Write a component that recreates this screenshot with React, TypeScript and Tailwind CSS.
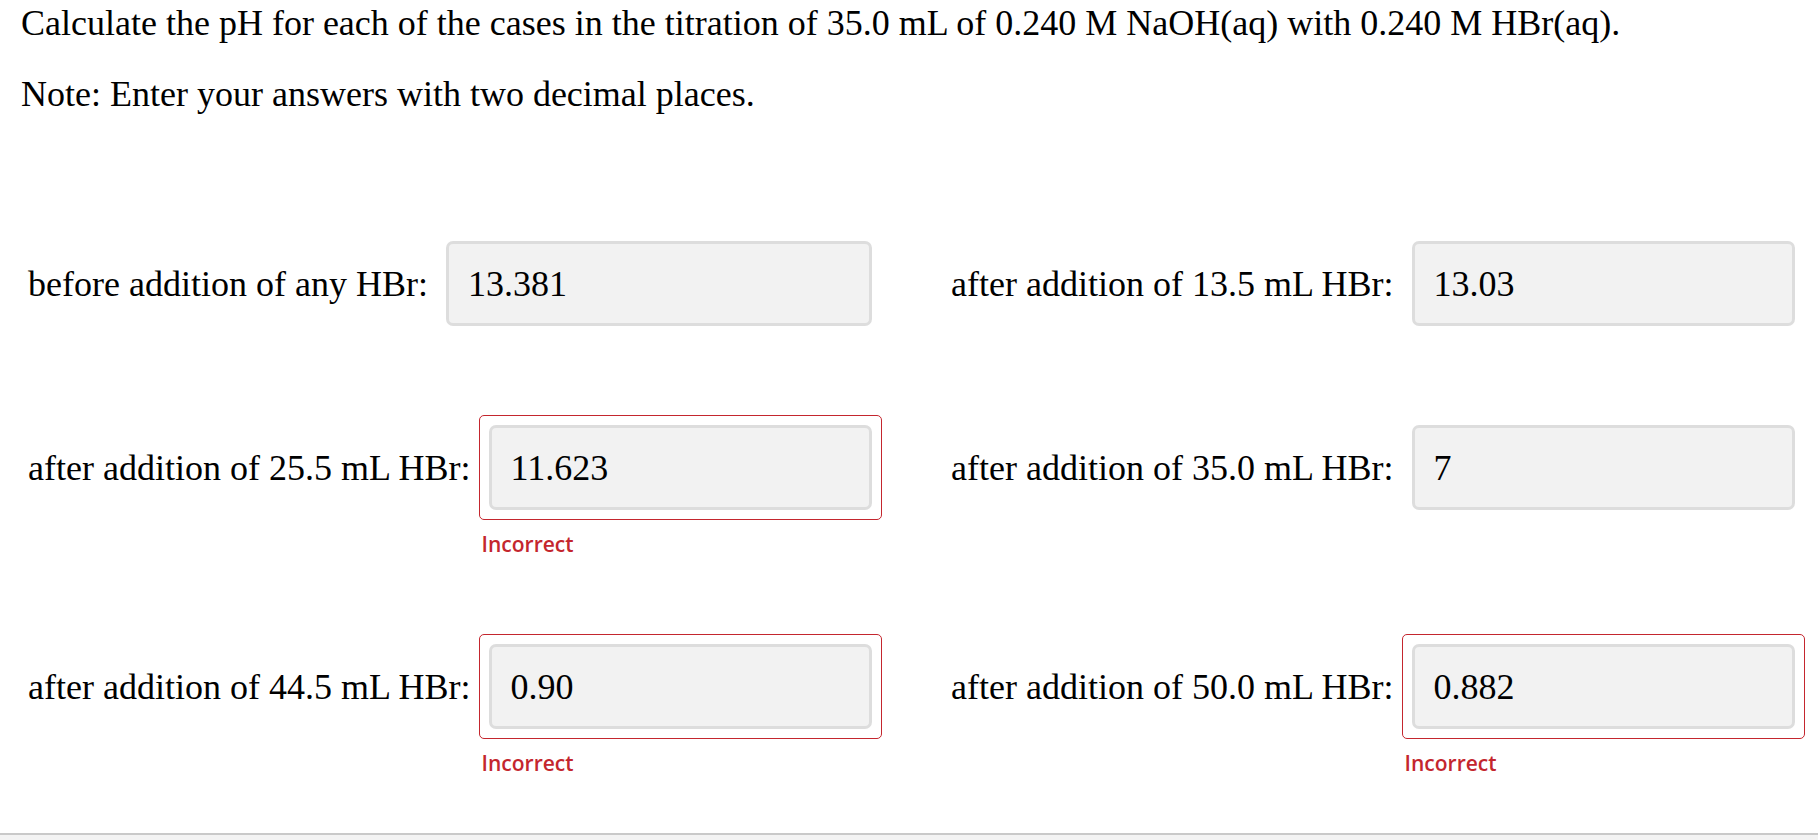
const rows = [
  [
    { label: "before addition of any HBr:", value: "13.381", wrong: false },
    { label: "after addition of 13.5 mL HBr:", value: "13.03", wrong: false },
  ],
  [
    { label: "after addition of 25.5 mL HBr:", value: "11.623", wrong: true },
    { label: "after addition of 35.0 mL HBr:", value: "7", wrong: false },
  ],
  [
    { label: "after addition of 44.5 mL HBr:", value: "0.90", wrong: true },
    { label: "after addition of 50.0 mL HBr:", value: "0.882", wrong: true },
  ],
];

function Answer({ label, value, wrong }: { label: string; value: string; wrong: boolean }) {
  return (
    <div className="flex items-start">
      <div className="h-[105px] flex items-center mr-[8px] whitespace-nowrap">{label}</div>
      <div className="flex-1 flex flex-col">
        <div
          className={
            wrong
              ? "border border-[#c4262e] rounded-[5px] p-[9px]"
              : "border border-transparent rounded-[5px] p-[9px]"
          }
        >
          <div className="h-[85px] bg-[#f2f2f2] border-[3px] border-[#dddddd] rounded-[7px] flex items-center pl-[19px]">
            {value}
          </div>
        </div>
        {wrong && (
          <div className="h-[35px] pt-[12px] pl-[3px] font-['Open_Sans',sans-serif] font-semibold text-[21px] leading-[24px] text-[#c4262e]">
            Incorrect
          </div>
        )}
      </div>
    </div>
  );
}

export default function App() {
  return (
    <div className="w-[1818px] h-[840px] bg-white flex flex-col overflow-hidden font-['Liberation_Serif',serif] text-[36px] text-black">
      <div className="pl-[21px] pt-[3px] leading-[40px]">
        <p>Calculate the pH for each of the cases in the titration of 35.0 mL of 0.240 M NaOH(aq) with 0.240 M HBr(aq).</p>
        <p className="mt-[31px]">Note: Enter your answers with two decimal places.</p>
      </div>
      <div className="mt-[117px] pl-[28px] grid grid-cols-[854px_854px] gap-x-[69px] gap-y-[79px]">
        {rows.flat().map((c) => (
          <Answer key={c.label} {...c} />
        ))}
      </div>
      <div className="mt-auto h-[7px] border-t-2 border-[#c9c9c9] bg-[#f3f3f3]" />
    </div>
  );
}
